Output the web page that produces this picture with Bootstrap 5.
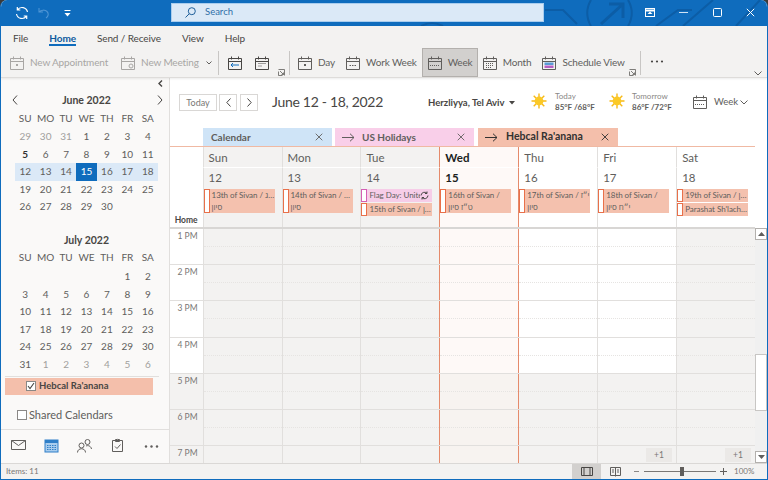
<!DOCTYPE html>
<html lang="en">
<head>
  <meta charset="UTF-8">
  <meta name="viewport" content="width=device-width, initial-scale=1.0">
  <title>Calendar - Outlook</title>
  <link rel="stylesheet" href="https://cdn.jsdelivr.net/npm/bootstrap@5.3.3/dist/css/bootstrap.min.css">
  <style>
    html, body { height: 100%; overflow: hidden; background: #3b3a39; }
    body { font-family: Lato, "Open Sans", "Liberation Sans", sans-serif; font-size: 10px; color: #605e5c; }
    svg { display: block; flex: none; }
    .app { width: 768px; height: 480px; overflow: hidden; background: #fff; border: solid #0f6cbd; border-width: 0 1px 1px 1px; border-radius: 7px 7px 0 0; }

    .title-bar { height: 26px; flex: none; background: #0f6cbd; color: #fff; position: relative; }
    .title-art { position: absolute; left: 0; top: 0; }
    .qa-btn { position: relative; margin-right: 9px; }
    .search-box { width: 373px; height: 19px; background: #dbe9f7; color: #2f6fa8; border: 1px solid #a9cdee; padding-left: 13px; gap: 9px; font-size: 9.5px; position: absolute; left: 170px; top: 3px; }
    .win-btn { position: absolute; top: 8px; }

    .ribbon { height: 52px; flex: none; background: #f3f2f1; border-bottom: 1px solid #dedcda; box-shadow: 0 1px 2px rgba(0,0,0,.08); position: relative; z-index: 2; }
    .rib-tabs { height: 24px; padding: 0 0 0 12px; }
    .rib-tab { padding: 0; margin-right: 21px; color: #484644; font-size: 10px; letter-spacing: -.1px; line-height: 24px; height: 20px; }
    .rib-tab.active { color: #0f5a9e; font-weight: 700; border-bottom: 2px solid #0f6cbd; }
    .rib-cmds { height: 29px; margin-top: -2px; padding-left: 9px; color: #605e5c; font-size: 10px; letter-spacing: -.15px; position: relative; }
    .cmd { display: flex; align-items: center; gap: 6px; height: 29px; white-space: nowrap; flex: none; }
    .cmd.off { color: #a8a6a4; }
    .cmd.on { background: #d2d0ce; border: 1px solid #b3b0ad; padding: 0 5px; width: 56px; }
    .rib-sep { width: 1px; height: 24px; background: #c8c6c4; flex: none; }
    .launcher { position: absolute; top: 21px; }

    .side-pane { width: 169px; flex: none; background: #faf9f8; border-right: 1px solid #e1dfdd; position: relative; padding-top: 14px; }
    .side-toggle { position: absolute; left: 157px; top: 2px; }
    .mini-cal { width: 143px; margin-left: 14px; display: grid; grid-template-columns: repeat(7, 1fr); grid-template-rows: 17.5px 18.5px repeat(5, 17.6px) 16px; text-align: center; line-height: 17.5px; font-size: 10px; position: relative; }
    .mini-title { grid-column: 1 / 8; font-weight: 700; font-size: 10.5px; color: #484644; }
    .mini-nav { position: absolute; top: 3px; }
    .mini-out { color: #a19f9d; }
    .mini-bold { font-weight: 700; color: #323130; }
    .mini-wk { background: #dbe9f7; }
    .mini-sel { background: #0f6cbd; color: #fff; }
    .folder-line { border-top: 1px solid #e1dfdd; margin: 4px 10px 0 4px; }
    .folder-row { height: 17px; margin: 1px 16px 0 4px; background: #f4bfab; padding-left: 21px; gap: 3px; font-weight: 700; font-size: 9.5px; color: #484644; }
    .tick { width: 10px; height: 10px; flex: none; border: 1px solid #8a8886; background: #fff; display: block; }
    .shared-row { margin: 13px 0 0 16px; gap: 2px; font-size: 11px; color: #605e5c; height: 14px; }
    .side-nav { position: absolute; left: 0; right: 0; bottom: 0; height: 34px; border-top: 1px solid #e1dfdd; }
    .side-nav svg { position: absolute; top: 9px; }

    .cal-pane { min-width: 0; position: relative; }
    .cal-top { height: 50px; flex: none; padding: 16px 0 0 9px; }
    .cal-top-row { height: 17px; position: relative; }
    .nav-btn { height: 17px; padding: 0; border: 1px solid #d9d7d5; border-radius: 0; background: #fff; color: #605e5c; font-size: 9px; display: flex; align-items: center; justify-content: center; }
    .cal-head { position: absolute; left: 93px; top: -2px; font-size: 14px; letter-spacing: -.3px; color: #484644; white-space: nowrap; line-height: 20px; }
    .cal-abs { position: absolute; white-space: nowrap; }
    .cal-loc { left: 249px; top: 2px; font-weight: 700; font-size: 9.5px; color: #484644; }
    .wx-text { font-size: 8px; line-height: 11px; color: #8a8886; top: -3px; }
    .wx-text b { color: #605e5c; font-weight: 700; display: block; }
    .cal-tabs { height: 18px; flex: none; margin-left: 33px; }
    .cal-tab { height: 18px; padding: 0 9px 0 8px; gap: 7px; font-weight: 700; font-size: 10px; color: #605e5c; flex: none; }
    .tab-blue { width: 129px; background: #cfe4f7; margin-right: 3px; }
    .tab-pink { width: 139px; background: #f9cfe9; margin-right: 4px; padding-left: 7px; }
    .tab-salmon { width: 140px; background: #f4bfab; color: #323130; padding-left: 7px; gap: 8px; font-size: 10.5px; }
    .tab-name { flex: 1 1 auto; }

    .wk-body { min-height: 0; }
    .wk-grid { flex: 1 1 auto; min-width: 0; overflow: hidden; }
    .wk-row { display: flex; }
    .gutter { width: 32.6px; flex: none; position: relative; text-align: right; padding-right: 5px; font-size: 8.5px; color: #797775; }
    .day-cell { flex: 1 1 0; min-width: 0; border-left: 1px solid #e1dfdd; position: relative; }
    .day-cell.past { background: #f3f2f1; }
    .day-cell.now { background: #fef9f7; border-left-color: #e58a6b; }
    .day-cell.after { border-left-color: #e58a6b; }
    .head-row { border-top: 1px solid #f0b9a3; height: 22px; }
    .head-row .day-cell { font-size: 11.5px; padding: 2px 0 0 5px; line-height: 18px; border-bottom: 1px solid #fff; }
    .now-text { font-weight: 700; color: #201f1e; }
    .allday-row { height: 61px; border-bottom: 2px solid #d8d6d4; }
    .allday-row .day-cell { padding: 1px 0 0 0; }
    .date-num { font-size: 11.5px; line-height: 18px; padding-left: 5px; height: 20px; }
    .home-lbl { position: absolute; right: 5px; bottom: 0; font-weight: 700; color: #484644; }
    .hol { display: flex; margin-right: 7px; background: #f4c1ae; color: #605e5c; font-size: 8px; letter-spacing: -.05px; line-height: 12px; }
    .hol + .hol { margin-top: 1px; }
    .hol-mark { width: 6px; flex: none; background: #fff; border: 1px solid #e8704a; }
    .hol-txt { padding: 0 0 0 2px; min-width: 0; flex: 1 1 auto; white-space: nowrap; overflow: hidden; text-overflow: ellipsis; }
    .hol.one { height: 13px; }
    .hol.pink { background: #f6cde8; }
    .pink .hol-mark { border-color: #d55fb3; }
    .pink .hol-txt { text-overflow: clip; }
    .hour-row { height: 36.17px; }
    .hour-row.first { height: 35.2px; }
    .hour-row + .hour-row { border-top: 1px solid #e1dfdd; }
    .hour-row .gutter { padding-top: 2px; line-height: 11px; background: #fff; }
    .half-line { height: 18px; border-bottom: 1px dotted #e6e4e2; }
    .late .gutter, .late .day-cell { background: #f3f2f1; }
    .late .day-cell.now { background: #f7f3f0; }
    .more-tag { position: absolute; width: 26px; height: 14px; background: #ebe9e7; text-align: center; line-height: 14px; font-size: 8.5px; color: #797775; z-index: 1; }

    .scroll-col { width: 12px; flex: none; background: #fff; }
    .scroll-gap { height: 82px; }
    .scroll-btn { height: 12px; background: #fff; border: 1px solid #b3b0ad; display: flex; align-items: center; justify-content: center; }
    .scroll-track { background: #f0f0f0; }
    .scroll-thumb { height: 57px; background: #fff; border: 1px solid #c8c6c4; }

    .status-bar { height: 16px; flex: none; background: #f3f2f1; border-top: 1px solid #dad8d6; font-size: 8px; color: #797775; padding-left: 5px; position: relative; line-height: 15px; }
    .view-on { position: absolute; left: 571px; top: 0; width: 29px; height: 15px; background: #d2d0ce; }
    .status-bar svg { position: absolute; }
    .zoom-line { position: absolute; left: 643px; top: 7px; width: 72px; height: 1px; background: #797775; }
    .zoom-knob { position: absolute; left: 679px; top: 3px; width: 4px; height: 9px; background: #605e5c; }
    .zoom-pct { position: absolute; left: 733px; top: 0; font-size: 8px; }
  </style>
</head>
<body>
  <svg width="0" height="0" style="position:absolute">
    <symbol id="cal" viewBox="0 0 14 14">
      <path d="M.5 2.500h13v11H.5zM.5 5.500h13M3.500.5v3M10.500.5v3" fill="none" stroke="currentColor"/>
    </symbol>
    <symbol id="launch" viewBox="0 0 7 7">
      <path d="M.5.5h6v6M.5 2.500v4h4M2 2l3.500 3.500M5.500 3.500v2h-2" fill="none" stroke="#605e5c" stroke-width=".8"/>
    </symbol>
    <symbol id="sun" viewBox="0 0 16 16">
      <path d="M8 .5v15M.5 8h15M2.700 2.700l10.600 10.600M13.300 2.700L2.700 13.300" stroke="#f7b916" stroke-width="1.400"/>
      <circle cx="8" cy="8" r="4.400" fill="#fbc926"/>
    </symbol>
    <symbol id="x" viewBox="0 0 9 9">
      <path d="M.8.8l7.400 7.400M8.200.8L.8 8.200" stroke="currentColor" fill="none"/>
    </symbol>
    <symbol id="arrow" viewBox="0 0 13 9">
      <path d="M0 4.500h12M8 .7l4 3.800-4 3.800" stroke="currentColor" fill="none"/>
    </symbol>
  </svg>

  <div class="app d-flex flex-column">
    <div class="title-bar d-flex align-items-center">
      <svg class="title-art" width="768" height="26" viewBox="0 0 768 26" fill="none" stroke="#0c5da6" stroke-width="2">
        <path d="M544 10h18l14 14"/>
        <path d="M590 0c-5 8-5 18 0 26M627 0c5 8 5 18 0 26"/>
        <path d="M600 24l22-20M608 4h14v14" stroke-width="3"/>
        <path d="M655 26l22-16h14M682 26l30-26M735 26l24-26M420 26c8-4 14-4 22 0"/>
      </svg>
      <span class="qa-btn" style="margin-left:14px">
        <svg width="14" height="14" viewBox="0 0 14 14" fill="none" stroke="#fff" stroke-width="1.200"><path d="M12.500 6a5.600 5.600 0 0 0-10-2.200M1.500 8a5.600 5.600 0 0 0 10 2.200M2.300 1v3h3M11.700 13v-3h-3"/></svg>
      </span>
      <span class="qa-btn" style="margin-right:14px">
        <svg width="12" height="12" viewBox="0 0 12 12" fill="none" stroke="#4d94d4" stroke-width="1.100"><path d="M1 1v4h4M1.200 5C3 2.800 7 2.500 9 4.500s1.500 5-1 6.500"/></svg>
      </span>
      <span class="qa-btn">
        <svg width="7" height="7" viewBox="0 0 7 7" fill="#fff"><path d="M.5 0h6v1h-6zM.5 3h6L3.500 6.500z"/></svg>
      </span>
      <div class="search-box d-flex align-items-center">
        <svg width="11" height="11" viewBox="0 0 11 11" fill="none" stroke="#1f5f99"><circle cx="6.800" cy="4.200" r="3.500"/><path d="M4.200 6.800L.5 10.500"/></svg>
        <span>Search</span>
      </div>
      <svg class="win-btn" style="left:644px" width="10" height="9" viewBox="0 0 10 9"><rect x=".5" y=".5" width="9" height="8" fill="none" stroke="#fff"/><path d="M.5 2.500h9" stroke="#fff" stroke-width="2"/><path d="M5 3.500l2.500 2.500h-5z" fill="#fff"/></svg>
      <svg class="win-btn" style="left:678px" width="9" height="9" viewBox="0 0 9 9"><path d="M0 4.500h9" stroke="#cfe2f4"/></svg>
      <svg class="win-btn" style="left:712px" width="9" height="9" viewBox="0 0 9 9"><rect x=".5" y=".5" width="8" height="8" rx="1" fill="none" stroke="#fff"/></svg>
      <svg class="win-btn" style="left:745px;color:#fff" width="9" height="9"><use href="#x"/></svg>
    </div>

    <div class="ribbon">
      <nav class="nav rib-tabs">
        <a class="nav-link rib-tab">File</a>
        <a class="nav-link rib-tab active">Home</a>
        <a class="nav-link rib-tab">Send / Receive</a>
        <a class="nav-link rib-tab">View</a>
        <a class="nav-link rib-tab">Help</a>
      </nav>
      <div class="rib-cmds d-flex align-items-center">
        <div class="cmd off" style="margin-right:13px">
          <svg width="14" height="14"><use href="#cal"/><rect x="6" y="8" width="2" height="2" fill="currentColor"/></svg>New Appointment
        </div>
        <div class="cmd off">
          <svg width="14" height="14"><use href="#cal"/><circle cx="10" cy="10" r="2" fill="#f3f2f1" stroke="currentColor"/></svg>New Meeting
        </div>
        <svg style="margin:0 6px 0 7px" width="6" height="4" viewBox="0 0 6 4" fill="none" stroke="#605e5c"><path d="M.5.500L3 3l2.500-2.500"/></svg>
        <span class="rib-sep" style="position:absolute;left:217px;top:3px"></span>
        <svg style="position:absolute;left:227px;top:8px;color:#484644" width="14" height="14"><use href="#cal"/><path d="M3 9h8M3 9l2-2M3 9l2 2" stroke="#0f6cbd" fill="none"/></svg>
        <svg style="position:absolute;left:254px;top:8px;color:#484644" width="14" height="14"><use href="#cal"/><path d="M3.500 7.500h8M3.500 10h4" stroke="currentColor" stroke-dasharray="1 1"/></svg>
        <svg class="launcher" style="left:277px" width="7" height="7"><use href="#launch"/></svg>
        <span class="rib-sep" style="position:absolute;left:288px;top:3px"></span>
        <div class="d-flex align-items-center" style="position:absolute;left:297px;top:0">
          <div class="cmd"><svg width="14" height="14"><use href="#cal"/><rect x="6" y="8" width="2" height="2" fill="currentColor"/></svg>Day</div>
          <div class="cmd" style="margin-left:11px"><svg width="14" height="14"><use href="#cal"/><path d="M3.500 9.500h7" stroke="currentColor" stroke-dasharray="1.500 1"/></svg>Work Week</div>
          <div class="cmd on" style="margin-left:5px"><svg width="14" height="14"><use href="#cal"/><path d="M2 9.500h10" stroke="currentColor" stroke-dasharray="1 1"/></svg>Week</div>
          <div class="cmd" style="margin-left:5px"><svg width="14" height="14"><use href="#cal"/><path d="M3 7.500h8M3 9.500h8M3 11.500h6" stroke="currentColor" stroke-dasharray="1 1"/></svg>Month</div>
          <div class="cmd" style="margin-left:11px"><svg width="14" height="14"><use href="#cal"/><rect x="2.500" y="6.500" width="9" height="2.500" fill="#5b9bd5"/><rect x="2.500" y="9.500" width="9" height="2.500" fill="#b65fc4"/></svg>Schedule View</div>
        </div>
        <svg class="launcher" style="left:628px" width="7" height="7"><use href="#launch"/></svg>
        <span class="rib-sep" style="position:absolute;left:639px;top:3px"></span>
        <svg style="position:absolute;left:649px;top:12px" width="14" height="3" viewBox="0 0 14 3" fill="#484644"><circle cx="2" cy="1.500" r="1.100"/><circle cx="7" cy="1.500" r="1.100"/><circle cx="12" cy="1.500" r="1.100"/></svg>
        <svg style="position:absolute;left:753px;top:23px" width="8" height="5" viewBox="0 0 8 5" fill="none" stroke="#605e5c"><path d="M.5.500L4 4 7.500.500"/></svg>
      </div>
    </div>

    <div class="d-flex flex-grow-1" style="min-height:0">
      <aside class="side-pane">
        <svg class="side-toggle" width="5" height="7" viewBox="0 0 5 7" fill="none" stroke="#484644" stroke-width="1.400"><path d="M4 .5L1 3.500 4 6.500"/></svg>
        <div id="juneCal" class="mini-cal"></div>
        <div id="julyCal" class="mini-cal"></div>
        <div class="folder-line"></div>
        <div class="folder-row d-flex align-items-center">
          <span class="tick"><svg width="8" height="8" viewBox="0 0 8 8" fill="none" stroke="#484644" stroke-width="1.100"><path d="M1 4l2 2.500L7 1"/></svg></span>
          <span>Hebcal Ra'anana</span>
        </div>
        <div class="shared-row d-flex align-items-center">
          <span class="tick"></span>
          <span>Shared Calendars</span>
        </div>
        <div class="side-nav">
          <svg style="left:10px" width="15" height="12" viewBox="0 0 15 12" fill="none" stroke="#605e5c"><path d="M.5 1.500h14v9H.5zM.5 1.500l7 5 7-5"/></svg>
          <svg style="left:43px;top:8px" width="15" height="15" viewBox="0 0 15 15"><rect x="1" y="2" width="13" height="12" fill="#a9cdee" stroke="#2f7fc8"/><rect x="1" y="2" width="13" height="3" fill="#2f7fc8"/><path d="M3 7.500h9M3 9.500h9M3 11.500h9" stroke="#2f7fc8" stroke-dasharray="1.500 1"/></svg>
          <svg style="left:76px" width="15" height="14" viewBox="0 0 15 14" fill="none" stroke="#605e5c"><circle cx="4.500" cy="6.500" r="2.500"/><path d="M.5 13.500c0-5 8-5 8 0"/><circle cx="10.500" cy="3" r="2.500"/><path d="M9 7c2-1 5 0 5.500 3"/></svg>
          <svg style="left:111px;top:8px" width="11" height="14" viewBox="0 0 11 14" fill="none" stroke="#605e5c"><path d="M.5 2.500h10v11H.5zM3.500 2.500v-1h1.500a1 1 0 0 1 1 0h1.500v2h-4zM3 8.500l2 2 3.500-4"/></svg>
          <svg style="left:143px;top:15px" width="15" height="3" viewBox="0 0 15 3" fill="#605e5c"><circle cx="2" cy="1.500" r="1.200"/><circle cx="7.500" cy="1.500" r="1.200"/><circle cx="13" cy="1.500" r="1.200"/></svg>
        </div>
      </aside>

      <section class="cal-pane flex-grow-1 d-flex flex-column">
        <div class="cal-top">
          <div class="cal-top-row d-flex">
            <button class="btn nav-btn" style="width:38px;color:#797775">Today</button>
            <button class="btn nav-btn" style="width:18px;margin-left:2px"><svg width="5" height="9" viewBox="0 0 5 9" fill="none" stroke="#484644"><path d="M4.500.5L.8 4.500l3.700 4"/></svg></button>
            <button class="btn nav-btn" style="width:18px;margin-left:3px"><svg width="5" height="9" viewBox="0 0 5 9" fill="none" stroke="#484644"><path d="M.5.5l3.700 4-3.700 4"/></svg></button>
            <span class="cal-head">June 12 - 18, 2022</span>
            <span class="cal-abs cal-loc">Herzliyya, Tel Aviv</span>
            <svg class="cal-abs" style="left:330px;top:7px" width="6" height="4" viewBox="0 0 6 4" fill="#484644"><path d="M0 0h6L3 3.500z"/></svg>
            <svg class="cal-abs" style="left:352px;top:-1px" width="16" height="16"><use href="#sun"/></svg>
            <span class="cal-abs wx-text" style="left:376px">Today<b>85°F /68°F</b></span>
            <svg class="cal-abs" style="left:430px;top:-1px" width="16" height="16"><use href="#sun"/></svg>
            <span class="cal-abs wx-text" style="left:453px">Tomorrow<b>86°F /72°F</b></span>
            <svg class="cal-abs" style="left:514px;top:1px;color:#605e5c" width="14" height="14"><use href="#cal"/><path d="M2 9.500h10" stroke="currentColor" stroke-dasharray="1 1"/></svg>
            <span class="cal-abs" style="left:535px;top:0;font-size:9.5px;line-height:15px">Week</span>
            <svg class="cal-abs" style="left:561px;top:6px" width="8" height="5" viewBox="0 0 8 5" fill="none" stroke="#605e5c"><path d="M.5.500L4 4 7.500.500"/></svg>
          </div>
        </div>
        <div class="cal-tabs d-flex">
          <div class="cal-tab tab-blue d-flex align-items-center"><span class="tab-name">Calendar</span><svg width="8" height="8" viewBox="0 0 9 9"><use href="#x"/></svg></div>
          <div class="cal-tab tab-pink d-flex align-items-center"><svg width="13" height="9"><use href="#arrow"/></svg><span class="tab-name">US Holidays</span><svg width="8" height="8" viewBox="0 0 9 9"><use href="#x"/></svg></div>
          <div class="cal-tab tab-salmon d-flex align-items-center"><svg width="13" height="9"><use href="#arrow"/></svg><span class="tab-name">Hebcal Ra'anana</span><svg width="8" height="8" viewBox="0 0 9 9"><use href="#x"/></svg></div>
        </div>
        <div class="wk-body d-flex flex-grow-1">
          <div id="wkGrid" class="wk-grid"></div>
          <div class="scroll-col d-flex flex-column">
            <div class="scroll-gap"></div>
            <div class="scroll-btn"><svg width="7" height="4" viewBox="0 0 7 4" fill="#605e5c"><path d="M0 4l3.500-4L7 4z"/></svg></div>
            <div class="scroll-track" style="height:114px"></div>
            <div class="scroll-thumb"></div>
            <div class="scroll-track" style="height:40px"></div>
            <div class="scroll-btn"><svg width="7" height="4" viewBox="0 0 7 4" fill="#605e5c"><path d="M0 0l3.500 4L7 0z"/></svg></div>
          </div>
        </div>
        <div class="more-tag" style="left:476px;top:370px">+1</div>
        <div class="more-tag" style="left:555px;top:370px">+1</div>
      </section>
    </div>

    <div class="status-bar">
      Items: 11
      <span class="view-on"></span>
      <svg style="left:580px;top:2px;color:#484644" width="12" height="11" viewBox="0 0 12 11" fill="none" stroke="currentColor"><path d="M.5 1.500h11v8H.5zM3 1.500v8M9 1.500v8"/></svg>
      <svg style="left:609px;top:2px" width="11" height="11" viewBox="0 0 11 11" fill="none" stroke="#605e5c"><path d="M.5 1.500h10v8H.5zM5.500 1.500v9M2 4h2M7 4h2M2 6h2M7 6h2"/></svg>
      <svg style="left:633px;top:7px" width="5" height="1" viewBox="0 0 5 1"><path d="M0 .5h5" stroke="#8a8886"/></svg>
      <span class="zoom-line"></span>
      <span class="zoom-knob"></span>
      <svg style="left:719px;top:4px" width="7" height="7" viewBox="0 0 7 7"><path d="M0 3.500h7M3.500 0v7" stroke="#605e5c"/></svg>
      <span class="zoom-pct">100%</span>
    </div>
  </div>

  <script src="https://cdn.jsdelivr.net/npm/bootstrap@5.3.3/dist/js/bootstrap.bundle.min.js"></script>
  <script>
    // mini calendars
    function buildMonth(id, title, cells, showNav) {
      var html = '<div class="mini-title">' + title + '</div>';
      if (showNav) {
        html += '<svg class="mini-nav" style="left:-3px" width="6" height="10" viewBox="0 0 6 10" fill="none" stroke="#484644"><path d="M5 .5L1 5l4 4.500"/></svg>';
        html += '<svg class="mini-nav" style="left:142px" width="6" height="10" viewBox="0 0 6 10" fill="none" stroke="#484644"><path d="M1 .5L5 5 1 9.500"/></svg>';
      }
      ['SU','MO','TU','WE','TH','FR','SA'].forEach(function (d) { html += '<div>' + d + '</div>'; });
      cells.forEach(function (c) { html += '<div class="' + (c[1] || '') + '">' + c[0] + '</div>'; });
      document.getElementById(id).innerHTML = html;
    }

    var june = [];
    [29,30,31].forEach(function (n) { june.push([n, 'mini-out']); });
    for (var i = 1; i <= 30; i++) {
      var cls = '';
      if (i === 5) cls = 'mini-bold';
      if (i >= 12 && i <= 18) cls = i === 15 ? 'mini-sel' : 'mini-wk';
      june.push([i, cls]);
    }
    // june leaves the last row empty, like the real control
    while (june.length < 42) june.push(['', '']);
    buildMonth('juneCal', 'June 2022', june, true);

    var july = [];
    for (i = 0; i < 5; i++) july.push(['', '']);
    for (i = 1; i <= 31; i++) july.push([i, '']);
    for (i = 1; i <= 6; i++) july.push([i, 'mini-out']);
    buildMonth('julyCal', 'July 2022', july, false);

    // week grid
    var days = [
      { name: 'Sun', num: 12, kind: 'past', hours: 'past', hol: [['13th of Sivan / י״ג<br>סיון']] },
      { name: 'Mon', num: 13, kind: 'past', hours: 'past', hol: [['14th of Sivan / י״ד<br>סיון']] },
      { name: 'Tue', num: 14, kind: 'past', hours: 'past', hol: [['Flag Day: Unite', 'pink'], ['15th of Sivan / ט״ו סיון', 'one']] },
      { name: 'Wed', num: 15, kind: 'now', hours: 'now', hol: [['16th of Sivan /<br>ט״ז סיון']] },
      { name: 'Thu', num: 16, kind: 'after', hours: 'after', hol: [['17th of Sivan / י״ז<br>סיון']] },
      { name: 'Fri', num: 17, kind: '', hours: '', hol: [['18th of Sivan /<br>י״ח סיון']] },
      { name: 'Sat', num: 18, kind: '', hours: 'past', hol: [['19th of Sivan / י״ט סיון', 'one'], ["Parashat Sh'lach-Lecha", 'one']] }
    ];

    var grid = '<div class="wk-row head-row"><div class="gutter"></div>';
    days.forEach(function (d) {
      grid += '<div class="day-cell ' + d.kind + (d.kind === 'now' ? ' now-text' : '') + '">' + d.name + '</div>';
    });
    grid += '</div><div class="wk-row allday-row"><div class="gutter"><span class="home-lbl">Home</span></div>';
    days.forEach(function (d) {
      grid += '<div class="day-cell ' + d.kind + '"><div class="date-num' + (d.kind === 'now' ? ' now-text' : '') + '">' + d.num + '</div>';
      d.hol.forEach(function (h) {
        var extra = h[1] === 'pink' ? ' pink one' : (h[1] ? ' one' : '');
        grid += '<div class="hol' + extra + '"><span class="hol-mark"></span><span class="hol-txt">' + h[0] + '</span>';
        if (h[1] === 'pink') {
          grid += '<svg style="margin:2px 3px 0 0" width="9" height="9" viewBox="0 0 9 9" fill="none" stroke="#484644"><path d="M1 4.500a3.500 3.500 0 0 1 6-2.200M8 4.500a3.500 3.500 0 0 1-6 2.200M7 .5v2H5M2 8.500v-2h2"/></svg>';
        }
        grid += '</div>';
      });
      grid += '</div>';
    });
    grid += '</div>';

    ['1 PM','2 PM','3 PM','4 PM','5 PM','6 PM','7 PM'].forEach(function (label, idx) {
      grid += '<div class="wk-row hour-row' + (idx === 0 ? ' first' : '') + (idx >= 4 ? ' late' : '') + '"><div class="gutter">' + label + '</div>';
      days.forEach(function (d) {
        grid += '<div class="day-cell ' + d.hours + '"><div class="half-line"></div></div>';
      });
      grid += '</div>';
    });
    document.getElementById('wkGrid').innerHTML = grid;
  </script>
</body>
</html>
